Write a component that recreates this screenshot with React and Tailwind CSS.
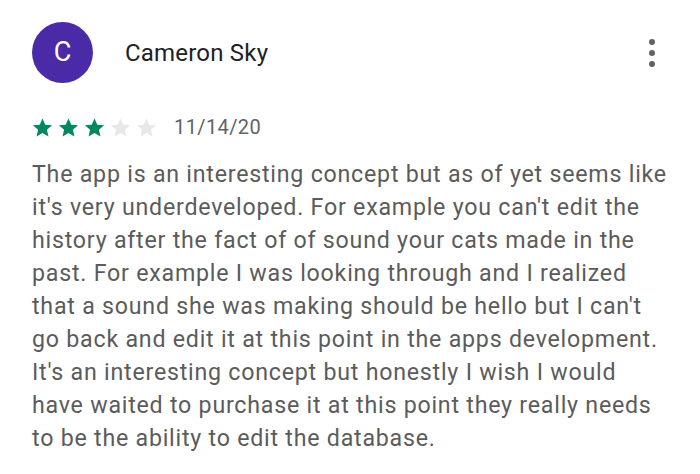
const Star = ({ filled }) => (
  <svg viewBox="0 0 24 24" className="w-[23px] h-[23px]">
    <path
      d="M12 2.5l2.9 6.6 7.1.6-5.4 4.7 1.6 7-6.2-3.7-6.2 3.7 1.6-7L2 9.7l7.1-.6z"
      fill={filled ? '#01875f' : '#e8e8e8'}
    />
  </svg>
);

const review =
  "The app is an interesting concept but as of yet seems like it's very underdeveloped. For example you can't edit the history after the fact of of sound your cats made in the past. For example I was looking through and I realized that a sound she was making should be hello but I can't go back and edit it at this point in the apps development. It's an interesting concept but honestly I wish I would have waited to purchase it at this point they really needs to be the ability to edit the database.";

export default function App() {
  return (
    <div className="w-[700px] h-[474px] bg-white overflow-hidden font-['Roboto',sans-serif]">
      <div className="flex items-center pl-[32px] pr-[45px] pt-[22px]">
        <div className="w-[61px] h-[61px] rounded-full bg-[#4a2aa6] flex items-center justify-center text-white text-[27px]">
          C
        </div>
        <div className="ml-[32px] text-[24px] text-[#202124] tracking-[0.2px]">Cameron Sky</div>
        <div className="ml-auto flex flex-col gap-[5px] items-center">
          <span className="w-[6px] h-[6px] rounded-full bg-[#5f6368]" />
          <span className="w-[6px] h-[6px] rounded-full bg-[#5f6368]" />
          <span className="w-[6px] h-[6px] rounded-full bg-[#5f6368]" />
        </div>
      </div>

      <div className="flex items-center pl-[31px] mt-[29px]">
        <div className="flex gap-[3px]">
          <Star filled />
          <Star filled />
          <Star filled />
          <Star />
          <Star />
        </div>
        <span className="ml-[16px] text-[20px] text-[#5f6368] tracking-[0.4px]">11/14/20</span>
      </div>

      <p className="pl-[32px] pr-[28px] mt-[16px] text-[23.2px] leading-[33px] text-[#5b5b5b] tracking-[0.77px]">
        {review}
      </p>
    </div>
  );
}
